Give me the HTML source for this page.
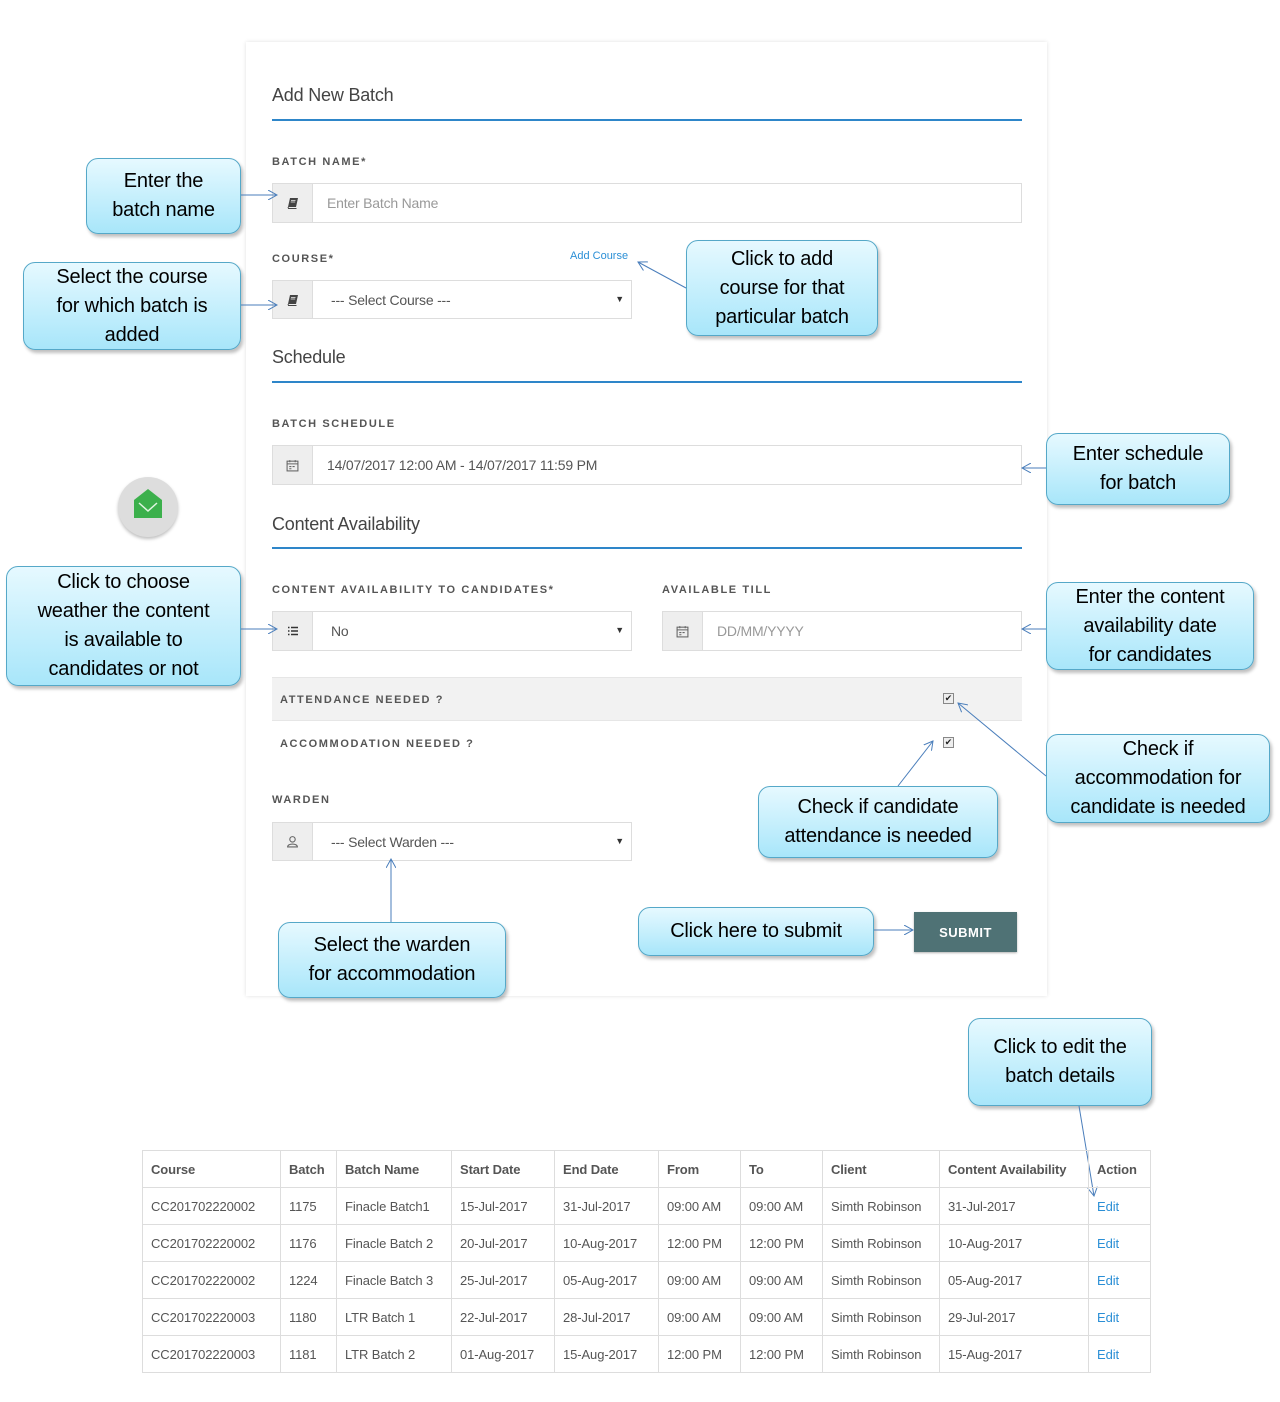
<!DOCTYPE html>
<html><head><meta charset="utf-8"><style>
*{box-sizing:border-box;margin:0;padding:0}
body{width:1280px;height:1402px;background:#fff;position:relative;font-family:"Liberation Sans",sans-serif;overflow:hidden}
.a{position:absolute}
.card{left:246px;top:42px;width:801px;height:954px;background:#fff;box-shadow:0 0 4px rgba(0,0,0,.12)}
.h{font-size:18px;color:#444;letter-spacing:-.2px}
.line{height:2px;background:#2e86c9;left:272px;width:750px}
.lbl{font-size:11px;font-weight:bold;color:#555;letter-spacing:1.6px}
.inp{border:1px solid #ddd;background:#fff;height:40px;display:flex;font-size:14px;color:#555}
.inp .ad{width:40px;background:#eee;border-right:1px solid #ddd;display:flex;align-items:center;justify-content:center;color:#555;font-size:12px}
.inp .t{padding-left:14px;display:flex;align-items:center;flex:1;position:relative;letter-spacing:-.2px}
.inp .car{position:absolute;right:7px;top:13px;font-size:9px;color:#333}
.co{position:absolute;border:1.5px solid #55a8c8;border-radius:12px;background:linear-gradient(#e6f9ff,#a8e6fa);box-shadow:2px 3px 3px rgba(0,0,0,.25);display:flex;align-items:center;justify-content:center;text-align:center;font-size:20px;line-height:29px;color:#000;letter-spacing:-.2px}
.cb{position:absolute;width:11px;height:11px;border:1px solid #888;background:#eee;font-size:9px;line-height:9px;text-align:center;color:#222}
table{position:absolute;left:142px;top:1150px;border-collapse:collapse;font-size:13px;color:#555}
td{border:1px solid #ddd;height:37px;padding:0 8px;white-space:nowrap;letter-spacing:-.1px}
tr:first-child td{font-weight:bold;color:#555}
.e{color:#2b8fd6}
</style></head><body>
<svg width="0" height="0" style="position:absolute"><defs>
<symbol id="book" viewBox="0 0 12 12"><path d="M3 1 H11 L9 10 H1 Z" fill="#444"/><path d="M1 10 L1.5 11.5 H9.5" stroke="#444" fill="none"/><path d="M4 3.5 H8.5 M3.7 5 H8.2" stroke="#eee" stroke-width=".8"/></symbol>
<symbol id="cal" viewBox="0 0 12 12"><rect x="1" y="2" width="10" height="9" fill="none" stroke="#666"/><path d="M1 4.5 H11 M3.5 1 V3 M8.5 1 V3 M3 7 H5 M6 7 H8 M3 9 H5" stroke="#666"/></symbol>
<symbol id="list" viewBox="0 0 12 12"><path d="M1 2.5 H2.5 M4 2.5 H11 M1 6 H2.5 M4 6 H11 M1 9.5 H2.5 M4 9.5 H11" stroke="#333" stroke-width="1.6"/></symbol>
<symbol id="user" viewBox="0 0 12 12"><circle cx="6" cy="4" r="2.5" fill="none" stroke="#666"/><path d="M1.5 11 C1.5 7.5 10.5 7.5 10.5 11 Z" fill="none" stroke="#666"/></symbol>
</defs></svg>
<div class="a card"></div>
<div class="a h" style="left:272px;top:85px">Add New Batch</div>
<div class="a line" style="top:119px"></div>
<div class="a lbl" style="left:272px;top:156px">BATCH NAME*</div>
<div class="a inp" style="left:272px;top:183px;width:750px"><div class="ad"><svg width="12" height="12"><use href="#book"/></svg></div><div class="t" style="color:#999">Enter Batch Name</div></div>
<div class="a lbl" style="left:272px;top:253px">COURSE*</div>
<div class="a" style="left:570px;top:250px;font-size:11px;color:#2b8fd6">Add Course</div>
<div class="a inp" style="left:272px;top:280px;width:360px;height:39px"><div class="ad"><svg width="12" height="12"><use href="#book"/></svg></div><div class="t" style="padding-left:18px">--- Select Course ---<span class="car">&#9660;</span></div></div>
<div class="a h" style="left:272px;top:347px">Schedule</div>
<div class="a line" style="top:381px"></div>
<div class="a lbl" style="left:272px;top:418px">BATCH SCHEDULE</div>
<div class="a inp" style="left:272px;top:445px;width:750px"><div class="ad"><svg width="13" height="13"><use href="#cal"/></svg></div><div class="t">14/07/2017 12:00 AM - 14/07/2017 11:59 PM</div></div>
<div class="a h" style="left:272px;top:514px">Content Availability</div>
<div class="a line" style="top:547px"></div>
<div class="a lbl" style="left:272px;top:584px">CONTENT AVAILABILITY TO CANDIDATES*</div>
<div class="a lbl" style="left:662px;top:584px">AVAILABLE TILL</div>
<div class="a inp" style="left:272px;top:611px;width:360px"><div class="ad"><svg width="12" height="12"><use href="#list"/></svg></div><div class="t" style="padding-left:18px">No<span class="car">&#9660;</span></div></div>
<div class="a inp" style="left:662px;top:611px;width:360px"><div class="ad"><svg width="13" height="13"><use href="#cal"/></svg></div><div class="t" style="color:#999">DD/MM/YYYY</div></div>
<div class="a" style="left:272px;top:677px;width:750px;height:44px;background:#f2f2f2;border-top:1px solid #e6e6e6;border-bottom:1px solid #e6e6e6"></div>
<div class="a lbl" style="left:280px;top:694px">ATTENDANCE NEEDED ?</div>
<div class="cb" style="left:943px;top:693px">&#10004;</div>
<div class="a lbl" style="left:280px;top:738px">ACCOMMODATION NEEDED ?</div>
<div class="cb" style="left:943px;top:737px">&#10004;</div>
<div class="a lbl" style="left:272px;top:794px">WARDEN</div>
<div class="a inp" style="left:272px;top:822px;width:360px;height:39px"><div class="ad"><svg width="13" height="13"><use href="#user"/></svg></div><div class="t" style="padding-left:18px">--- Select Warden ---<span class="car">&#9660;</span></div></div>
<div class="a" style="left:914px;top:912px;width:103px;height:40px;background:#4f7275;color:#fff;font-size:13px;font-weight:bold;letter-spacing:.5px;display:flex;align-items:center;justify-content:center;box-shadow:0 1px 2px rgba(0,0,0,.3)">SUBMIT</div>

<div class="a" style="left:118px;top:477px;width:60px;height:60px;border-radius:50%;background:#ddd;box-shadow:0 2px 3px rgba(0,0,0,.25)"></div>
<svg class="a" style="left:118px;top:477px" width="60" height="60"><path d="M16 23 L30 12 L44 23 L44 41 L16 41Z" fill="#3cb04c"/><path d="M21 26 L30 34 L39 26" stroke="#dff5e0" stroke-width="1.5" fill="none"/></svg>

<div class="co" style="left:86px;top:158px;width:155px;height:76px">Enter the<br>batch name</div>
<div class="co" style="left:23px;top:262px;width:218px;height:88px">Select the course<br>for which batch is<br>added</div>
<div class="co" style="left:686px;top:240px;width:192px;height:96px">Click to add<br>course for that<br>particular batch</div>
<div class="co" style="left:1046px;top:433px;width:184px;height:72px">Enter schedule<br>for batch</div>
<div class="co" style="left:6px;top:566px;width:235px;height:120px">Click to choose<br>weather the content<br>is available to<br>candidates or not</div>
<div class="co" style="left:1046px;top:582px;width:208px;height:88px">Enter the content<br>availability date<br>for candidates</div>
<div class="co" style="left:1046px;top:734px;width:224px;height:89px">Check if<br>accommodation for<br>candidate is needed</div>
<div class="co" style="left:758px;top:786px;width:240px;height:72px">Check if candidate<br>attendance is needed</div>
<div class="co" style="left:278px;top:922px;width:228px;height:76px">Select the warden<br>for accommodation</div>
<div class="co" style="left:638px;top:907px;width:236px;height:49px">Click here to submit</div>
<div class="co" style="left:968px;top:1018px;width:184px;height:88px">Click to edit the<br>batch details</div>

<svg class="a" style="left:0;top:0" width="1280" height="1402" fill="none" stroke="#4a7ebb" stroke-width="1">
<defs><marker id="m" markerWidth="10" markerHeight="10" refX="9" refY="5" orient="auto" markerUnits="userSpaceOnUse"><path d="M0 0 L9 5 L0 10" stroke="#4a7ebb" fill="none"/></marker></defs>
<line x1="241" y1="195" x2="277" y2="195" marker-end="url(#m)"/>
<line x1="241" y1="305" x2="277" y2="305" marker-end="url(#m)"/>
<line x1="686" y1="288" x2="638" y2="262" marker-end="url(#m)"/>
<line x1="1046" y1="468" x2="1022" y2="468" marker-end="url(#m)"/>
<line x1="241" y1="629" x2="277" y2="629" marker-end="url(#m)"/>
<line x1="1046" y1="629" x2="1022" y2="629" marker-end="url(#m)"/>
<line x1="1046" y1="776" x2="958" y2="703" marker-end="url(#m)"/>
<line x1="898" y1="786" x2="933" y2="741" marker-end="url(#m)"/>
<line x1="391" y1="922" x2="391" y2="859" marker-end="url(#m)"/>
<line x1="874" y1="930" x2="913" y2="930" marker-end="url(#m)"/>
<line x1="1079" y1="1106" x2="1094" y2="1196" marker-end="url(#m)"/>
</svg>

<table>
<tr><td style="width:138px">Course</td><td style="width:56px">Batch</td><td style="width:115px">Batch Name</td><td style="width:103px">Start Date</td><td style="width:104px">End Date</td><td style="width:82px">From</td><td style="width:82px">To</td><td style="width:117px">Client</td><td style="width:149px">Content Availability</td><td style="width:62px">Action</td></tr>
<tr><td>CC201702220002</td><td>1175</td><td>Finacle Batch1</td><td>15-Jul-2017</td><td>31-Jul-2017</td><td>09:00 AM</td><td>09:00 AM</td><td>Simth Robinson</td><td>31-Jul-2017</td><td class="e">Edit</td></tr>
<tr><td>CC201702220002</td><td>1176</td><td>Finacle Batch 2</td><td>20-Jul-2017</td><td>10-Aug-2017</td><td>12:00 PM</td><td>12:00 PM</td><td>Simth Robinson</td><td>10-Aug-2017</td><td class="e">Edit</td></tr>
<tr><td>CC201702220002</td><td>1224</td><td>Finacle Batch 3</td><td>25-Jul-2017</td><td>05-Aug-2017</td><td>09:00 AM</td><td>09:00 AM</td><td>Simth Robinson</td><td>05-Aug-2017</td><td class="e">Edit</td></tr>
<tr><td>CC201702220003</td><td>1180</td><td>LTR Batch 1</td><td>22-Jul-2017</td><td>28-Jul-2017</td><td>09:00 AM</td><td>09:00 AM</td><td>Simth Robinson</td><td>29-Jul-2017</td><td class="e">Edit</td></tr>
<tr><td>CC201702220003</td><td>1181</td><td>LTR Batch 2</td><td>01-Aug-2017</td><td>15-Aug-2017</td><td>12:00 PM</td><td>12:00 PM</td><td>Simth Robinson</td><td>15-Aug-2017</td><td class="e">Edit</td></tr>
</table>
</body></html>
